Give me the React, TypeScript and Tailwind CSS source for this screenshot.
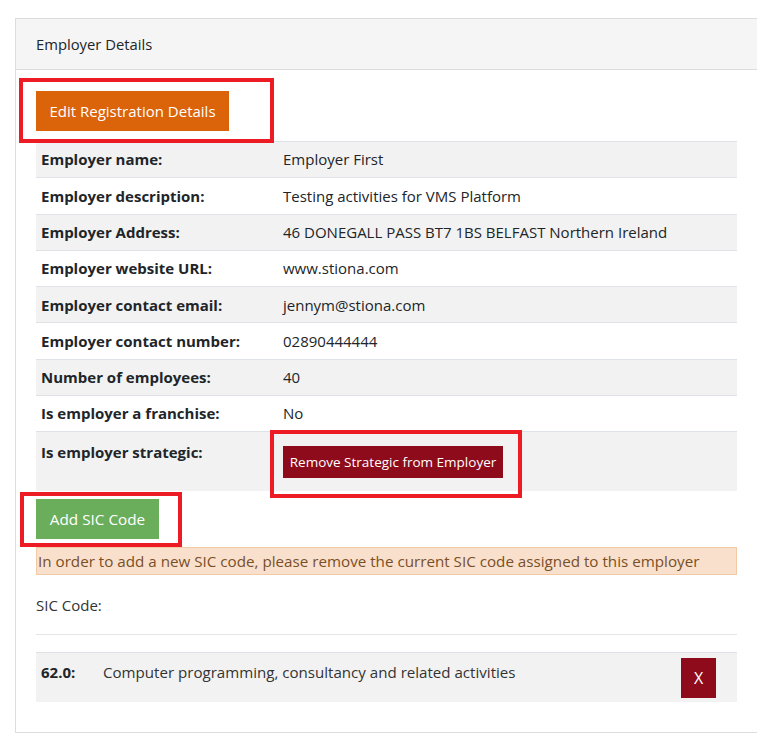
import React from "react";

const rows: { label: string; value: string; gray: boolean }[] = [
  { label: "Employer name:", value: "Employer First", gray: true },
  { label: "Employer description:", value: "Testing activities for VMS Platform", gray: false },
  { label: "Employer Address:", value: "46 DONEGALL PASS BT7 1BS BELFAST Northern Ireland", gray: true },
  { label: "Employer website URL:", value: "www.stiona.com", gray: false },
  { label: "Employer contact email:", value: "jennym@stiona.com", gray: true },
  { label: "Employer contact number:", value: "02890444444", gray: false },
  { label: "Number of employees:", value: "40", gray: true },
  { label: "Is employer a franchise:", value: "No", gray: false },
];

export default function App() {
  return (
    <div
      className="relative w-[757px] h-[745px] bg-white overflow-hidden text-[#212529]"
      style={{ fontFamily: '"Open Sans", "Noto Sans", sans-serif' }}
    >
      <div className="pt-[18px] pl-[15px]">
        <div className="border-l border-t border-b border-[#dddddd] w-[742px]">
          <div className="h-[51px] bg-[#f5f5f5] border-b border-[#dddddd] pl-[20px] flex items-center text-[14.8px]">
            Employer Details
          </div>
          <div className="pl-[20px] pr-[20px] pt-[21px] pb-[30px]">
            <button className="h-[40px] w-[193px] bg-[#db6309] text-white text-[15px] flex items-center justify-center">
              Edit Registration Details
            </button>
            <div className="mt-[10px]">
              {rows.map((r) => (
                <div
                  key={r.label}
                  className={`grid grid-cols-[242px_1fr] h-[36.3px] items-center border-t border-[#dee2e6] text-[15px] ${
                    r.gray ? "bg-[#f2f2f2]" : "bg-white"
                  }`}
                >
                  <div className="px-[5px] font-bold whitespace-nowrap">{r.label}</div>
                  <div className="px-[5px] whitespace-nowrap">{r.value}</div>
                </div>
              ))}
              <div className="grid grid-cols-[242px_1fr] h-[60px] items-start border-t border-[#dee2e6] bg-[#f2f2f2] text-[15px]">
                <div className="px-[5px] pt-[9px] font-bold whitespace-nowrap">Is employer strategic:</div>
                <div className="px-[5px] pt-[14px]">
                  <button className="h-[32px] w-[220px] bg-[#8d0b1a] text-white text-[13.5px] flex items-center justify-center whitespace-nowrap">
                    Remove Strategic from Employer
                  </button>
                </div>
              </div>
            </div>
            <button className="mt-[8px] h-[40px] w-[123px] bg-[#6aad5b] text-white text-[15.3px] flex items-center justify-center whitespace-nowrap">
              Add SIC Code
            </button>
            <div className="mt-[8px] h-[28px] border border-[#f3caa6] bg-[#f9e0cd] text-[#7a4f26] text-[15.2px] flex items-center px-[1px] whitespace-nowrap overflow-hidden">
              In order to add a new SIC code, please remove the current SIC code assigned to this employer
            </div>
            <div className="mt-[20px] leading-[20px] text-[15px] text-[#333333]">SIC Code:</div>
            <div className="mt-[19px] border-t border-[#e5e5e5]"></div>
            <div className="mt-[17px] h-[50px] bg-[#f2f2f2] border-t border-[#dee2e6] flex items-start text-[15px] relative">
              <div className="pl-[5px] w-[67px] font-bold pt-[9px] leading-[20px]">62.0:</div>
              <div className="pt-[9px] leading-[20px] text-[#333333] text-[15.1px]">
                Computer programming, consultancy and related activities
              </div>
              <div className="ml-auto mr-[21px] mt-[5px]">
                <button className="h-[40px] w-[35px] bg-[#8d0b1a] text-white text-[16px] flex items-center justify-center">
                  X
                </button>
              </div>
            </div>
          </div>
        </div>
      </div>

      <div className="absolute left-[19px] top-[78px] w-[255px] h-[65px] border-[4px] border-[#ed1c24] pointer-events-none"></div>
      <div className="absolute left-[270px] top-[430px] w-[252px] h-[68px] border-[4px] border-[#ed1c24] pointer-events-none"></div>
      <div className="absolute left-[20px] top-[492px] w-[162px] h-[55px] border-[4px] border-[#ed1c24] pointer-events-none"></div>
    </div>
  );
}
